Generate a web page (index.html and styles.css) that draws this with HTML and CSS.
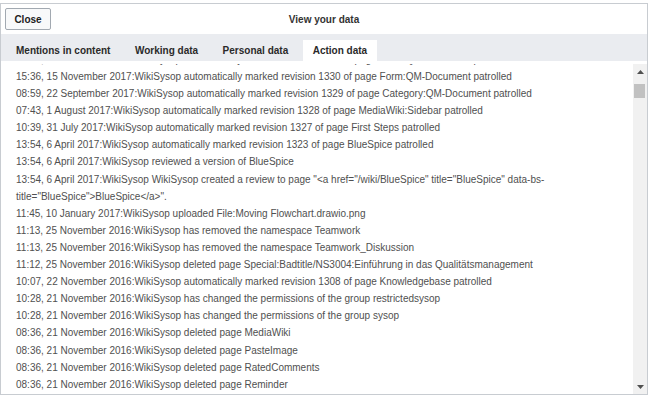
FILE: index.html
```html
<!DOCTYPE html>
<html lang="en">
<head>
<meta charset="utf-8">
<title>View your data</title>
<link rel="stylesheet" href="styles.css">
</head>
<body>
<div class="dialog">
  <div class="header">
    <div class="header-left"><button class="close" type="button">Close</button></div>
    <div class="title">View your data</div>
    <div class="header-right"></div>
  </div>
  <div class="tabs">
    <div class="tab">Mentions in content</div>
    <div class="tab">Working data</div>
    <div class="tab">Personal data</div>
    <div class="tab active">Action data</div>
  </div>
  <div class="content">
    <div class="log">
      <ul class="log-list">
        <li>16:02, 15 November 2017:WikiSysop automatically marked revision 1331 of page Form:QM-Document patrolled</li>
        <li>15:36, 15 November 2017:WikiSysop automatically marked revision 1330 of page Form:QM-Document patrolled</li>
        <li>08:59, 22 September 2017:WikiSysop automatically marked revision 1329 of page Category:QM-Document patrolled</li>
        <li>07:43, 1 August 2017:WikiSysop automatically marked revision 1328 of page MediaWiki:Sidebar patrolled</li>
        <li>10:39, 31 July 2017:WikiSysop automatically marked revision 1327 of page First Steps patrolled</li>
        <li>13:54, 6 April 2017:WikiSysop automatically marked revision 1323 of page BlueSpice patrolled</li>
        <li>13:54, 6 April 2017:WikiSysop reviewed a version of BlueSpice</li>
        <li>13:54, 6 April 2017:WikiSysop WikiSysop created a review to page "&lt;a href="/wiki/BlueSpice" title="BlueSpice" data-bs-title="BlueSpice"&gt;BlueSpice&lt;/a&gt;".</li>
        <li>11:45, 10 January 2017:WikiSysop uploaded File:Moving Flowchart.drawio.png</li>
        <li>11:13, 25 November 2016:WikiSysop has removed the namespace Teamwork</li>
        <li>11:13, 25 November 2016:WikiSysop has removed the namespace Teamwork_Diskussion</li>
        <li>11:12, 25 November 2016:WikiSysop deleted page Special:Badtitle/NS3004:Einführung in das Qualitätsmanagement</li>
        <li>10:07, 22 November 2016:WikiSysop automatically marked revision 1308 of page Knowledgebase patrolled</li>
        <li>10:28, 21 November 2016:WikiSysop has changed the permissions of the group restrictedsysop</li>
        <li>10:28, 21 November 2016:WikiSysop has changed the permissions of the group sysop</li>
        <li>08:36, 21 November 2016:WikiSysop deleted page MediaWiki</li>
        <li>08:36, 21 November 2016:WikiSysop deleted page PasteImage</li>
        <li>08:36, 21 November 2016:WikiSysop deleted page RatedComments</li>
        <li>08:36, 21 November 2016:WikiSysop deleted page Reminder</li>
      </ul>
    </div>
    <div class="scrollbar">
      <div class="sb-btn">
        <svg width="7" height="4" viewBox="0 0 7 4"><polygon points="0,4 3.5,0 7,4" fill="#505050"/></svg>
      </div>
      <div class="sb-thumb"></div>
      <div class="sb-space"></div>
      <div class="sb-btn">
        <svg width="7" height="4" viewBox="0 0 7 4"><polygon points="0,0 7,0 3.5,4" fill="#505050"/></svg>
      </div>
    </div>
  </div>
</div>
</body>
</html>
```
FILE: styles.css
```css
html, body {
  margin: 0;
  padding: 0;
  background: #ffffff;
}

body {
  padding-top: 3px;
  font-family: "Liberation Sans", Arial, sans-serif;
}

.dialog {
  width: 648px;
  height: 392px;
  box-sizing: border-box;
  border: 1px solid #c8ccd1;
  display: flex;
  flex-direction: column;
  background: #ffffff;
}

.header {
  height: 30px;
  flex: none;
  box-sizing: border-box;
  padding: 0 4px;
  display: grid;
  grid-template-columns: 1fr auto 1fr;
  align-items: center;
}

.close {
  width: 46px;
  height: 22px;
  padding: 0;
  border: 1px solid #a2a9b1;
  border-radius: 2px;
  background: #f8f9fa;
  color: #202122;
  font-family: "Liberation Sans", Arial, sans-serif;
  font-size: 10px;
  font-weight: bold;
  display: block;
}

.title {
  font-size: 10px;
  font-weight: bold;
  color: #333333;
}

.tabs {
  height: 27px;
  flex: none;
  box-sizing: border-box;
  background: #eaecf0;
  display: flex;
  align-items: flex-end;
  gap: 4.5px;
  padding-left: 5px;
}

.tab {
  height: 21px;
  padding: 0 10px;
  display: flex;
  align-items: center;
  font-size: 10px;
  font-weight: bold;
  color: #2a2a2a;
  white-space: nowrap;
}

.tab.active {
  background: #ffffff;
}

.content {
  flex: 1;
  min-height: 0;
  display: flex;
  padding-top: 3px;
}

.log {
  flex: 1;
  min-width: 0;
  overflow: hidden;
  padding-left: 15px;
  padding-right: 8px;
}

.log-list {
  list-style: none;
  margin: -13.1px 0 0;
  padding: 0;
  font-size: 10px;
  line-height: 17.1px;
  color: #505050;
}

.scrollbar {
  width: 14px;
  flex: none;
  background: #f1f1f1;
  display: flex;
  flex-direction: column;
  padding-top: 1px;
  box-sizing: border-box;
}

.sb-btn {
  height: 14px;
  display: flex;
  align-items: center;
  justify-content: center;
}

.sb-btn svg {
  display: block;
}

.sb-thumb {
  height: 14px;
  width: 11px;
  margin: 5px 0 0 1px;
  background: #c1c1c1;
}

.sb-space {
  flex: 1;
}
```
